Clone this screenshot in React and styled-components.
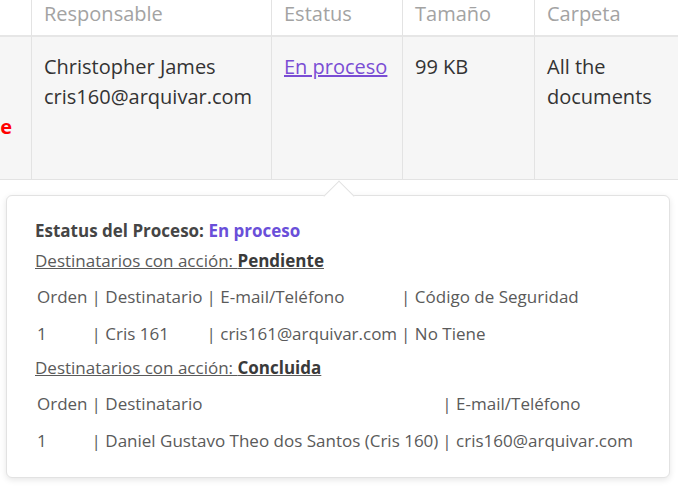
import React from "react";
import styled, { createGlobalStyle } from "styled-components";

const GlobalStyle = createGlobalStyle`
  body {
    margin: 0;
    background: #ffffff;
    font-family: "Open Sans", "Noto Sans", sans-serif;
  }
`;

const Page = styled.div`
  width: 678px;
  height: 490px;
  overflow: hidden;
`;

const Grid = styled.div`
  display: grid;
  grid-template-columns: 31px 240px 131px 132px 1fr;
`;

const HeadCell = styled.div`
  height: 37px;
  box-sizing: border-box;
  padding: 0 12px;
  border-left: ${(p) => (p.$first ? "none" : "1px solid #e3e3e3")};
  border-bottom: 2px solid #e6e6e6;
  color: #a3a3a3;
  font-size: 20px;
  line-height: 28px;
  background: #ffffff;
`;

const BodyCell = styled.div`
  height: 143px;
  box-sizing: border-box;
  padding: 15px 12px 0;
  border-left: ${(p) => (p.$first ? "none" : "1px solid #e3e3e3")};
  border-bottom: 1px solid #e3e3e3;
  background: #f6f6f6;
  color: #333333;
  font-size: 20px;
  line-height: 30px;
`;

const ClipCell = styled(BodyCell)`
  display: flex;
  flex-direction: column;
  align-items: flex-end;
  overflow: hidden;
  padding-right: 20px;
  white-space: nowrap;
`;

const Line = styled.div`
  height: 30px;
`;

const Alert = styled.div`
  color: #ff0000;
  font-weight: 700;
`;

const StatusLink = styled.a`
  color: #7a4dd4;
  text-decoration: underline;
  cursor: pointer;
`;

const Popover = styled.div`
  position: relative;
  margin: 15px 0 0 6px;
  width: 664px;
  height: 283px;
  box-sizing: border-box;
  padding: 21px 27px 0 28px;
  background: #ffffff;
  border: 1px solid #e2e2e2;
  border-radius: 6px;
  box-shadow: 0 2px 6px rgba(0, 0, 0, 0.1);
  color: #5a5a5a;
  font-size: 17px;

  &::before {
    content: "";
    position: absolute;
    top: -11px;
    left: 321px;
    width: 21px;
    height: 21px;
    background: #ffffff;
    border-top: 1px solid #e2e2e2;
    border-left: 1px solid #e2e2e2;
    transform: rotate(45deg);
  }
`;

const Title = styled.div`
  position: relative;
  font-weight: 700;
  color: #454545;
  line-height: 28px;
`;

const StatusText = styled.span`
  color: #6a4fd9;
`;

const SectionHead = styled.div`
  line-height: 32px;
  text-decoration: underline;
  color: #5a5a5a;

  & b {
    color: #3a3a3a;
  }
`;

const Recipients = styled.table`
  border-collapse: collapse;
  margin: 1px 0 0 0;

  & td {
    padding: 0 2px;
    height: 37px;
    white-space: nowrap;
    color: #5a5a5a;
  }
`;

const pending = {
  head: ["Orden", "| Destinatario", "| E-mail/Teléfono", "| Código de Seguridad"],
  rows: [["1", "| Cris 161", "| cris161@arquivar.com", "| No Tiene"]],
};

const done = {
  head: ["Orden", "| Destinatario", "| E-mail/Teléfono"],
  rows: [["1", "| Daniel Gustavo Theo dos Santos (Cris 160)", "| cris160@arquivar.com"]],
};

const RecipientTable = ({ data }) => (
  <Recipients>
    <tbody>
      {[data.head, ...data.rows].map((row, i) => (
        <tr key={i}>
          {row.map((cell, j) => (
            <td key={j}>{cell}</td>
          ))}
        </tr>
      ))}
    </tbody>
  </Recipients>
);

export default function App() {
  return (
    <Page>
      <GlobalStyle />
      <Grid>
        <HeadCell $first />
        <HeadCell>Responsable</HeadCell>
        <HeadCell>Estatus</HeadCell>
        <HeadCell>Tamaño</HeadCell>
        <HeadCell>Carpeta</HeadCell>

        <ClipCell $first>
          <Line />
          <Line />
          <Alert>Urgente</Alert>
        </ClipCell>
        <BodyCell>
          Christopher James
          <br />
          cris160@arquivar.com
        </BodyCell>
        <BodyCell>
          <StatusLink>En proceso</StatusLink>
        </BodyCell>
        <BodyCell>99 KB</BodyCell>
        <BodyCell>
          All the
          <br />
          documents
        </BodyCell>
      </Grid>

      <Popover>
        <Title>
          Estatus del Proceso: <StatusText>En proceso</StatusText>
        </Title>
        <SectionHead>
          Destinatarios con acción: <b>Pendiente</b>
        </SectionHead>
        <RecipientTable data={pending} />
        <SectionHead>
          Destinatarios con acción: <b>Concluida</b>
        </SectionHead>
        <RecipientTable data={done} />
      </Popover>
    </Page>
  );
}
